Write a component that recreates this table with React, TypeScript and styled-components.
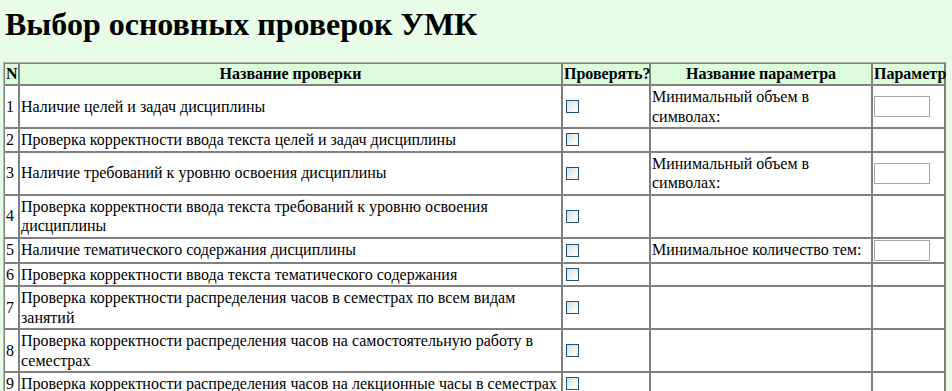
import React from "react";
import styled, { createGlobalStyle } from "styled-components";

const Global = createGlobalStyle`
  html, body { margin: 0; padding: 0; background: #e8fde8; }
  body { font-family: "Liberation Serif", "Times New Roman", serif; color: #000; }
`;

const Page = styled.div`
  padding: 0 6px 0 3px;
`;

const Title = styled.h1`
  margin: 0;
  padding: 6px 0 0 2px;
  height: 62px;
  box-sizing: border-box;
  font-family: "Liberation Serif", "Times New Roman", serif;
  font-size: 32px;
  line-height: 36px;
  font-weight: bold;
`;

const Table = styled.table`
  width: 100%;
  table-layout: fixed;
  border-collapse: separate;
  border-spacing: 0;
  border: 1px solid;
  border-color: #b4b4b4 #808080 #808080 #b4b4b4;
  font-family: "Liberation Serif", "Times New Roman", serif;
  font-size: 16px;
  line-height: 19.5px;
`;

const Th = styled.th`
  background: #dcfcdc;
  border: 1px solid #808080;
  padding: 1px;
  line-height: 18px;
  font-weight: bold;
  text-align: center;
  white-space: nowrap;
`;

const Td = styled.td`
  background: #ffffff;
  border: 1px solid #808080;
  padding: 1px;
  vertical-align: middle;
  text-align: left;
`;

const Check = styled.input`
  appearance: none;
  -webkit-appearance: none;
  display: block;
  width: 13px;
  height: 13px;
  margin: 3px 3px 3px 2px;
  border: 1px solid #1c5180;
  background: linear-gradient(135deg, #dcdcd6 0%, #f4f4f0 60%, #ffffff 100%);
  box-sizing: border-box;
`;

const ParamInput = styled.input`
  display: block;
  width: 56px;
  height: 21px;
  box-sizing: border-box;
  margin: 0;
  border: 1px solid #a5a5a5;
  background: #fff;
  padding: 0;
`;

type Row = { n: number; name: string; param?: string };

const rows: Row[] = [
  { n: 1, name: "Наличие целей и задач дисциплины", param: "Минимальный объем в символах:" },
  { n: 2, name: "Проверка корректности ввода текста целей и задач дисциплины" },
  { n: 3, name: "Наличие требований к уровню освоения дисциплины", param: "Минимальный объем в символах:" },
  { n: 4, name: "Проверка корректности ввода текста требований к уровню освоения дисциплины" },
  { n: 5, name: "Наличие тематического содержания дисциплины", param: "Минимальное количество тем:" },
  { n: 6, name: "Проверка корректности ввода текста тематического содержания" },
  { n: 7, name: "Проверка корректности распределения часов в семестрах по всем видам занятий" },
  { n: 8, name: "Проверка корректности распределения часов на самостоятельную работу в семестрах" },
  { n: 9, name: "Проверка корректности распределения часов на лекционные часы в семестрах" },
];

export default function App() {
  return (
    <Page>
      <Global />
      <Title>Выбор основных проверок УМК</Title>
      <Table>
        <colgroup>
          <col style={{ width: 15 }} />
          <col style={{ width: 543 }} />
          <col style={{ width: 88 }} />
          <col style={{ width: 222 }} />
          <col />
        </colgroup>
        <thead>
          <tr>
            <Th>N</Th>
            <Th>Название проверки</Th>
            <Th>Проверять?</Th>
            <Th>Название параметра</Th>
            <Th>Параметр</Th>
          </tr>
        </thead>
        <tbody>
          {rows.map((r) => (
            <tr key={r.n}>
              <Td>{r.n}</Td>
              <Td>{r.name}</Td>
              <Td>
                <Check type="checkbox" />
              </Td>
              <Td>{r.param ?? ""}</Td>
              <Td>{r.param ? <ParamInput type="text" /> : null}</Td>
            </tr>
          ))}
        </tbody>
      </Table>
    </Page>
  );
}
